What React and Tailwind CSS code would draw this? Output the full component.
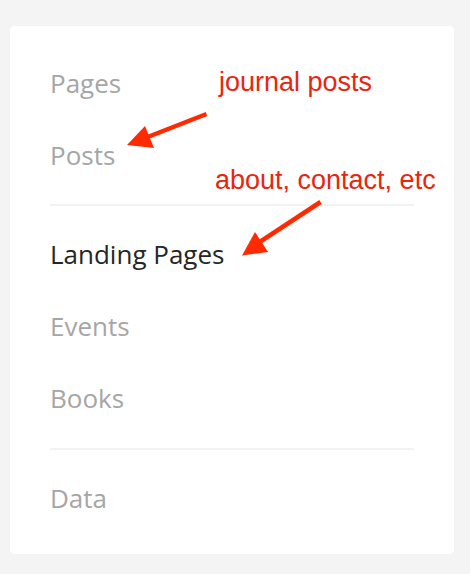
export default function App() {
  const gray = "text-[#a6a6a6]";
  const item = "h-[72px] flex items-center text-[26px] leading-none";
  return (
    <div className="w-[470px] h-[574px] bg-[#f4f4f4] pt-[26px] pl-[10px]" style={{ fontFamily: '"Open Sans", sans-serif' }}>
      <div className="relative w-[444px] h-[528px] bg-white rounded-[4px] shadow-[0_0_1px_rgba(0,0,0,0.08)] px-[40px] pt-[21px] flex flex-col">
        <div className={`${item} ${gray}`}>Pages</div>
        <div className={`${item} ${gray}`}>Posts</div>
        <div className="h-[2px] bg-[#f2f2f2] mt-[13px] mb-[12px]" />
        <div className={`${item} text-[#262626]`}>Landing Pages</div>
        <div className={`${item} ${gray}`}>Events</div>
        <div className={`${item} ${gray}`}>Books</div>
        <div className="h-[2px] bg-[#f2f2f2] mt-[14px] mb-[12px]" />
        <div className={`${item} ${gray}`}>Data</div>

        <div className="absolute left-[209px] top-[43px] text-[27px] leading-none text-[#e8260f]" style={{ fontFamily: '"Liberation Sans", Arial, sans-serif' }}>journal posts</div>
        <div className="absolute left-[205px] top-[141px] text-[27px] leading-none text-[#e8260f]" style={{ fontFamily: '"Liberation Sans", Arial, sans-serif' }}>about, contact, etc</div>

        <svg className="absolute left-0 top-0 pointer-events-none" width="444" height="528" viewBox="10 26 444 528">
          <line x1="206.5" y1="114" x2="140" y2="140" stroke="#ff2a00" strokeWidth="4.5" />
          <polygon points="127,145 145,126 154,148" fill="#ff2a00" />
          <line x1="320.5" y1="202" x2="255" y2="245" stroke="#ff2a00" strokeWidth="4.5" />
          <polygon points="242,255.5 255,232 268,252" fill="#ff2a00" />
        </svg>
      </div>
    </div>
  );
}
